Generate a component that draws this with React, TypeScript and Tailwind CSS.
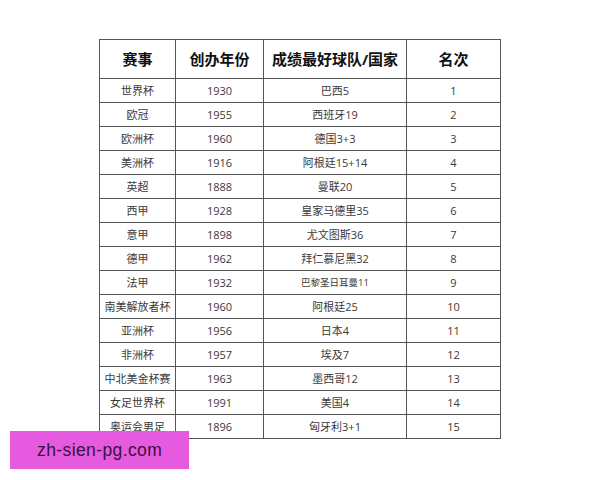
import React from 'react';

const rows: [string, string, string, string][] = [
  ['世界杯', '1930', '巴西5', '1'],
  ['欧冠', '1955', '西班牙19', '2'],
  ['欧洲杯', '1960', '德国3+3', '3'],
  ['美洲杯', '1916', '阿根廷15+14', '4'],
  ['英超', '1888', '曼联20', '5'],
  ['西甲', '1928', '皇家马德里35', '6'],
  ['意甲', '1898', '尤文图斯36', '7'],
  ['德甲', '1962', '拜仁慕尼黑32', '8'],
  ['法甲', '1932', '巴黎圣日耳曼11', '9'],
  ['南美解放者杯', '1960', '阿根廷25', '10'],
  ['亚洲杯', '1956', '日本4', '11'],
  ['非洲杯', '1957', '埃及7', '12'],
  ['中北美金杯赛', '1963', '墨西哥12', '13'],
  ['女足世界杯', '1991', '美国4', '14'],
  ['奥运会男足', '1896', '匈牙利3+1', '15'],
];

const headers = ['赛事', '创办年份', '成绩最好球队/国家', '名次'];
const widths = ['w-[76px]', 'w-[88px]', 'w-[143px]', 'w-[94px]'];

export default function App() {
  return (
    <div className="relative w-[600px] h-[480px] bg-white overflow-hidden font-['Open_Sans','Noto_Sans_CJK_SC',sans-serif]">
      <div className="pt-[39px] flex justify-center">
        <table className="border-collapse w-[401px] table-fixed">
          <thead>
            <tr className="h-[39px]">
              {headers.map((h, i) => (
                <th
                  key={h}
                  className={`${widths[i]} border border-[#555] text-[15px] font-bold text-[#111] text-center align-middle p-0`}
                >
                  {h}
                </th>
              ))}
            </tr>
          </thead>
          <tbody>
            {rows.map((r) => (
              <tr key={r[0]} className="h-[24px]">
                {r.map((c, i) => (
                  <td
                    key={i}
                    className={`border border-[#555] text-center align-middle p-0 leading-none text-[#3a3a3a] ${
                      r[0] === '法甲' && i === 2 ? 'text-[9.5px]' : 'text-[11px]'
                    }`}
                  >
                    {c}
                  </td>
                ))}
              </tr>
            ))}
          </tbody>
        </table>
      </div>

      <div className="absolute left-[10px] top-[431px] w-[179px] h-[38px] bg-[#e65ae0] flex items-center pl-[27px]">
        <span className="text-[17.5px] text-[#3a1040] font-['Liberation_Sans',sans-serif] tracking-[0.4px]">
          zh-sien-pg.com
        </span>
      </div>
    </div>
  );
}
